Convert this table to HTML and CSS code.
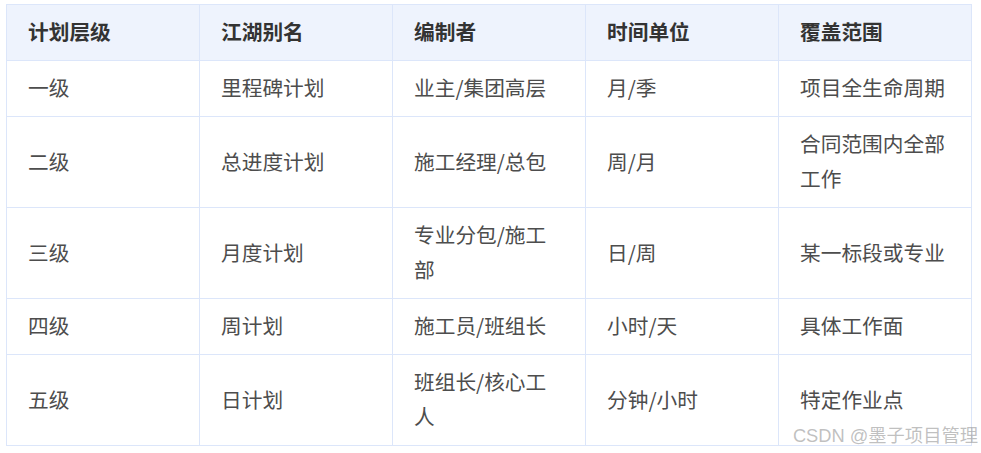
FILE: index.html
```html
<!DOCTYPE html>
<html lang="zh-CN">
<head>
<meta charset="utf-8">
<link rel="stylesheet" href="styles.css">
</head>
<body>
<div class="wrap">
<table class="plan">
<thead>
<tr><th>计划层级</th><th>江湖别名</th><th>编制者</th><th>时间单位</th><th>覆盖范围</th></tr>
</thead>
<tbody>
<tr><td>一级</td><td>里程碑计划</td><td>业主/集团高层</td><td>月/季</td><td>项目全生命周期</td></tr>
<tr><td>二级</td><td>总进度计划</td><td>施工经理/总包</td><td>周/月</td><td>合同范围内全部工作</td></tr>
<tr><td>三级</td><td>月度计划</td><td>专业分包/施工部</td><td>日/周</td><td>某一标段或专业</td></tr>
<tr><td>四级</td><td>周计划</td><td>施工员/班组长</td><td>小时/天</td><td>具体工作面</td></tr>
<tr><td>五级</td><td>日计划</td><td>班组长/核心工人</td><td>分钟/小时</td><td>特定作业点</td></tr>
</tbody>
</table>
<div class="watermark">CSDN @墨子项目管理</div>
</div>
</body>
</html>
```

FILE: styles.css
```css
html, body {
  margin: 0;
  padding: 0;
  background: #ffffff;
}
body {
  font-family: "Noto Sans CJK SC", "Noto Sans", sans-serif;
}
.wrap {
  position: relative;
  width: 981px;
  height: 453px;
  padding: 4px 0 0 6px;
  box-sizing: border-box;
}
.plan {
  border-collapse: collapse;
  table-layout: fixed;
  width: 966px;
  font-size: 20.7px;
  line-height: 35px;
}
.plan th, .plan td {
  border: 1px solid #dce6fa;
  padding: 9px 24px 11px 21px;
  text-align: left;
  vertical-align: middle;
}
.plan th {
  background: #eef3fd;
  color: #333333;
  font-weight: 700;
}
.plan td {
  color: #4d4d4d;
  font-weight: 400;
}
.watermark {
  position: absolute;
  right: 3px;
  bottom: 6px;
  font-size: 18.3px;
  line-height: 22px;
  color: rgba(130, 130, 130, 0.5);
  font-family: "Liberation Sans", "Noto Sans CJK SC", sans-serif;
  white-space: nowrap;
}
```
